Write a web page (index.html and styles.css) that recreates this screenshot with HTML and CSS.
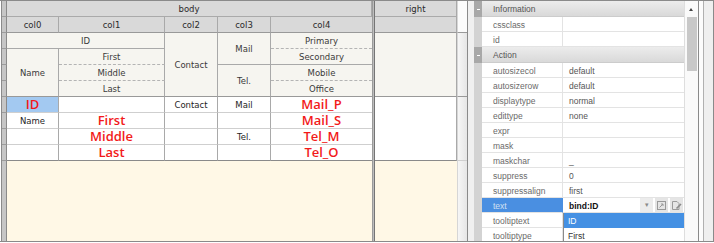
FILE: index.html
```html
<!DOCTYPE html>
<html lang="en">
<head>
	<meta charset="utf-8" />
	<title>Grid Format Editor</title>
	<link rel="stylesheet" href="styles.css">
</head>
<body>
<div class="app">
	<div class="grid-panel">
		<div class="grid">
			<div class="gut"></div><div class="c hd span5">body</div>

			<div class="gut"></div><div class="c hd hd2">col0</div><div class="c hd hd2">col1</div><div class="c hd hd2">col2</div><div class="c hd hd2">col3</div><div class="c hd hd2 col4">col4</div>

			<div class="gut"></div><div class="c head span2">ID</div><div class="c head rows4 head-end">Contact</div><div class="c head rows2">Mail</div><div class="c head dash col4">Primary</div>
			<div class="gut"></div><div class="c head rows3 head-end">Name</div><div class="c head dash">First</div><div class="c head col4">Secondary</div>
			<div class="gut"></div><div class="c head dash">Middle</div><div class="c head rows2 head-end">Tel.</div><div class="c head dash col4">Mobile</div>
			<div class="gut"></div><div class="c head head-end">Last</div><div class="c head head-end col4">Office</div>

			<div class="gut"></div><div class="c row picked"><span class="bound">ID</span></div><div class="c row"></div><div class="c row">Contact</div><div class="c row">Mail</div><div class="c row col4"><span class="bound">Mail_P</span></div>
			<div class="gut"></div><div class="c row">Name</div><div class="c row"><span class="bound">First</span></div><div class="c row"></div><div class="c row"></div><div class="c row col4"><span class="bound">Mail_S</span></div>
			<div class="gut"></div><div class="c row"></div><div class="c row"><span class="bound">Middle</span></div><div class="c row"></div><div class="c row">Tel.</div><div class="c row col4"><span class="bound">Tel_M</span></div>
			<div class="gut"></div><div class="c row row-end"></div><div class="c row row-end"><span class="bound">Last</span></div><div class="c row row-end"></div><div class="c row row-end"></div><div class="c row row-end col4"><span class="bound">Tel_O</span></div>

			<div class="gut gut-last"></div><div class="summary span5"></div>
		</div>

		<div class="band-sep"></div>

		<div class="right-grid">
			<div class="c hd">right</div><div class="strip strip-hd"></div>
			<div class="c hd hd2"></div>
			<div class="c head rows4 head-end"></div><div class="strip rows4 head-end"></div>
			<div class="c row rows4 row-end"></div><div class="strip rows4 row-end"></div>
			<div class="summary"></div><div class="strip"></div>
		</div>
	</div>

	<div class="gap"></div>

	<div class="props">
		<div class="prop-list">
			<div class="cat"><span class="toggle"></span><span class="cat-name">Information</span></div>
			<div class="prop"><span class="pg"></span><span class="pk">cssclass</span><span class="pv"></span></div>
			<div class="prop"><span class="pg"></span><span class="pk">id</span><span class="pv"></span></div>
			<div class="cat"><span class="toggle"></span><span class="cat-name">Action</span></div>
			<div class="prop"><span class="pg"></span><span class="pk">autosizecol</span><span class="pv">default</span></div>
			<div class="prop"><span class="pg"></span><span class="pk">autosizerow</span><span class="pv">default</span></div>
			<div class="prop"><span class="pg"></span><span class="pk">displaytype</span><span class="pv">normal</span></div>
			<div class="prop"><span class="pg"></span><span class="pk">edittype</span><span class="pv">none</span></div>
			<div class="prop"><span class="pg"></span><span class="pk">expr</span><span class="pv"></span></div>
			<div class="prop"><span class="pg"></span><span class="pk">mask</span><span class="pv"></span></div>
			<div class="prop"><span class="pg"></span><span class="pk">maskchar</span><span class="pv">_</span></div>
			<div class="prop"><span class="pg"></span><span class="pk">suppress</span><span class="pv">0</span></div>
			<div class="prop"><span class="pg"></span><span class="pk">suppressalign</span><span class="pv">first</span></div>
			<div class="prop sel">
				<span class="pg"></span><span class="pk">text</span>
				<span class="pv edit">
					<b class="bind">bind:ID</b>
					<span class="drop-btn">&#9662;</span>
					<span class="icon-btn">
						<svg width="11" height="11" viewBox="0 0 11 11"><rect x="1.5" y="1.5" width="8" height="8" fill="none" stroke="#9a9a9a"/><path d="M3.5 7.5 L7 4 M5 4 H7 V6" fill="none" stroke="#9a9a9a"/></svg>
					</span>
					<span class="icon-btn">
						<svg width="11" height="11" viewBox="0 0 11 11"><path d="M1.5 1.5 H6 L8 3.5 V9.5 H1.5 Z" fill="none" stroke="#9a9a9a"/><path d="M5.5 8.5 L10 4" fill="none" stroke="#8a8a8a" stroke-width="1.6"/></svg>
					</span>
				</span>
			</div>
			<div class="prop"><span class="pg"></span><span class="pk">tooltiptext</span><span class="pv"></span></div>
			<div class="prop"><span class="pg"></span><span class="pk">tooltiptype</span><span class="pv"></span></div>

			<ul class="combo-list">
				<li class="on">ID</li>
				<li>First</li>
				<li>Middle</li>
			</ul>
		</div>
		<div class="scrollbar"><span class="arrow"></span><span class="thumb"></span></div>
	</div>

	<div class="edge-gap"></div>
	<div class="edge-strip"></div>
</div>
</body>
</html>
```

FILE: styles.css
```css
body{
	margin:0;
	background:#ffffff;
	overflow:hidden;
}

.app{
	display:flex;
	width:714px;
	height:240px;
	border-top:1px solid #8a8a8a;
	border-bottom:1px solid #8a8a8a;
}

/* Grid format area */
.grid-panel{
	display:flex;
	margin-left:1px;
	border-left:1px solid #8a8a8a;
	border-right:1px solid #8a8a8a;
	font-family:"DejaVu Sans", sans-serif;
	font-size:8.5px;
	color:#333;
}

.grid{
	display:grid;
	grid-template-columns:5px 52px 106px 53px 53px 101px;
	grid-template-rows:repeat(10, 16px) 80px;
}

.right-grid{
	display:grid;
	grid-template-columns:82px 10px;
	grid-template-rows:repeat(10, 16px) 80px;
}

.gut{
	background:#c6c6c6;
	border-right:1px solid #8a8a8a;
	border-bottom:1px solid #9c9c9c;
}
.gut-last{
	border-bottom:none;
}

.c{
	display:flex;
	align-items:center;
	justify-content:center;
	white-space:nowrap;
	border-right:1px solid #a9a9a9;
	border-bottom:1px solid #cfcfcf;
}

.span5{ grid-column:span 5; }
.span2{ grid-column:span 2; }
.rows2{ grid-row:span 2; }
.rows3{ grid-row:span 3; }
.rows4{ grid-row:span 4; }

.hd{
	background:#d9d9d9;
	border-bottom-color:#aaaaaa;
	color:#2a2a2a;
}
.hd2{
	border-bottom-color:#999999;
}
.col4{
	border-right:none;
}

.head{
	background:#f6f5f0;
	border-bottom-color:#a9a9a9;
	color:#3a3a3a;
}
.head.dash{
	border-bottom:1px dashed #b4b4b4;
}
.head-end{
	border-bottom-color:#999999 !important;
}

.row{
	background:#ffffff;
	color:#1e1e1e;
}
.row-end{
	border-bottom-color:#8a8a8a;
}
.c.picked{
	background:#a3c9f1;
}

.bound{
	display:block;
	height:15px;
	font-family:"Open Sans", sans-serif;
	font-weight:600;
	font-size:13px;
	line-height:15px;
	color:#f21a1a;
}

.summary{
	background:#fff8e6;
}

.band-sep{
	width:1px;
	background:#bdbdbd;
	border-left:1px solid #9a9a9a;
	border-right:1px solid #757575;
}

.strip{
	background:linear-gradient(to right, #f6f6f6, #e6e6e6);
	border-left:1px solid #d6d6d6;
	border-bottom:1px solid #cfcfcf;
}
.strip-hd{
	grid-row:span 2;
	background:#fbfbfb;
	border-bottom-color:#999999;
}
.right-grid .summary + .strip{
	border-bottom:none;
}

.gap{
	width:6px;
	background:#f0f0f0;
}

/* Property panel */
.props{
	display:flex;
	width:224px;
	border-right:1px solid #8a8a8a;
	font-family:"Liberation Sans", sans-serif;
	font-size:8.5px;
}

.prop-list{
	position:relative;
	width:210px;
	overflow:hidden;
}

.cat{
	display:flex;
	height:16px;
}
.toggle{
	position:relative;
	width:8px;
	background:#a8a8a8;
}
.toggle::after{
	content:"";
	position:absolute;
	left:3px;
	top:8px;
	width:3px;
	height:1px;
	background:#ffffff;
}
.cat-name{
	flex:1;
	display:flex;
	align-items:center;
	padding-left:11px;
	background:linear-gradient(#ececec, #d9d9d9);
	border-bottom:1px solid #cccccc;
	color:#555;
}

.prop{
	display:flex;
	height:15px;
}
.pg{
	width:8px;
	background:#d3d3d3;
}
.pk{
	box-sizing:border-box;
	width:81px;
	display:flex;
	align-items:center;
	padding:1px 0 0 11px;
	border-right:1px solid #e3e3e3;
	border-bottom:1px solid #e3e3e3;
	color:#6a6a6a;
}
.pv{
	flex:1;
	display:flex;
	align-items:center;
	padding:1px 0 0 6px;
	border-bottom:1px solid #e3e3e3;
	color:#555;
}

.sel .pk{
	background:#4a8fe1;
	color:#d2e0f2;
	border-right-color:#4a8fe1;
}
.edit{
	padding:0 1px 0 6px;
	gap:2px;
	align-items:stretch;
}
.bind{
	flex:1;
	display:flex;
	align-items:center;
	color:#111;
	padding-top:1px;
}
.drop-btn{
	width:13px;
	display:flex;
	align-items:center;
	justify-content:center;
	background:#ececec;
	color:#8a8a8a;
	font-size:7px;
}
.icon-btn{
	width:13px;
	display:flex;
	align-items:center;
	justify-content:center;
	background:#e5e5e5;
}

.combo-list{
	position:absolute;
	left:89px;
	top:212px;
	width:121px;
	margin:0;
	padding:0;
	list-style:none;
	background:#ffffff;
	border-left:1px solid #8a8a8a;
	box-sizing:border-box;
}
.combo-list li{
	height:15px;
	line-height:16px;
	padding-left:4px;
	color:#333;
}
.combo-list li.on{
	background:#4490e3;
	color:#ffffff;
}

.scrollbar{
	position:relative;
	width:13px;
	border-left:1px solid #dedede;
	background:#fafafa;
}
.arrow{
	position:absolute;
	left:4px;
	top:7px;
	border-left:2px solid transparent;
	border-right:2px solid transparent;
	border-bottom:3px solid #444;
}
.thumb{
	position:absolute;
	left:2px;
	top:16px;
	width:10px;
	height:54px;
	background:#c8c8c8;
}

.edge-gap{
	width:4px;
	background:#fcfcfc;
}
.edge-strip{
	width:9px;
	background:#efefef;
	border-left:1px solid #b0b0b0;
	border-right:1px solid #8a8a8a;
}
```
